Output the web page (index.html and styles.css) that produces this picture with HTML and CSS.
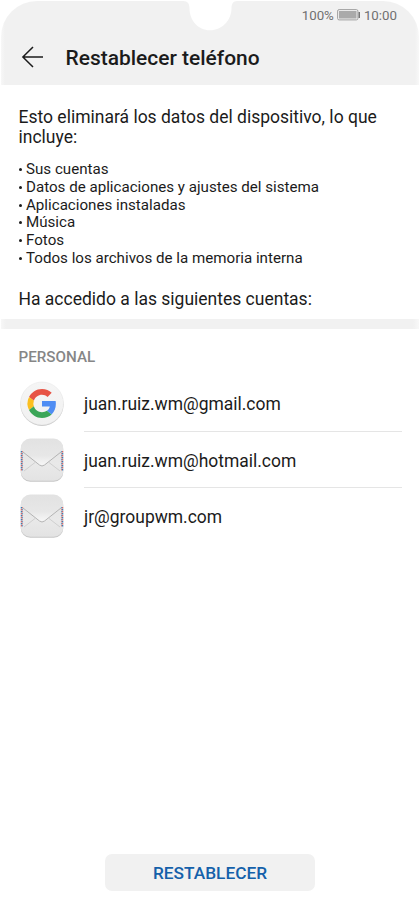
FILE: index.html
```html
<!DOCTYPE html>
<html lang="es">
<head>
<meta charset="utf-8">
<title>Restablecer teléfono</title>
<link rel="stylesheet" href="styles.css">
</head>
<body>
<div class="screen">
  <header class="header">
    <svg class="notch" width="54" height="31" viewBox="0 0 54 31"><path d="M0 0V1C5 1 6.500 4 6.500 8.500C6.500 20 15 30.300 27 30.300S48.500 20 48.500 8.500C48.500 4 50 1 54 1V0Z" fill="#fff"/></svg>
    <div class="status">
      <span>100%</span>
      <svg class="battery" width="24" height="12" viewBox="0 0 24 12"><rect x=".6" y=".6" width="20.300" height="10.300" rx="1.500" fill="#f1f1f1" stroke="#a0a0a0"/><rect x="2" y="2" width="17.500" height="7.500" fill="#aaa"/><path d="M21.500 3H23V9H21.500Z" fill="#777"/></svg>
      <span>10:00</span>
    </div>
    <div class="bar">
      <svg class="back" width="22" height="22" viewBox="0 0 22 22"><path d="M12 1 1.900 11 12 21M2 11H22" fill="none" stroke="#1b1b1b" stroke-width="1.500"/></svg>
      <h1 class="title">Restablecer teléfono</h1>
    </div>
  </header>
  <main class="content">
    <section class="info">
      <p class="lead">Esto eliminará los datos del dispositivo, lo que<br>incluye:</p>
      <ul class="items">
        <li>Sus cuentas</li>
        <li>Datos de aplicaciones y ajustes del sistema</li>
        <li>Aplicaciones instaladas</li>
        <li>Música</li>
        <li>Fotos</li>
        <li>Todos los archivos de la memoria interna</li>
      </ul>
      <p class="signed">Ha accedido a las siguientes cuentas:</p>
    </section>
    <div class="divider"></div>
    <h2 class="section">PERSONAL</h2>
    <div class="account">
      <svg class="icon" width="46" height="46" viewBox="0 0 46 46">
        <defs><linearGradient id="disc" x2="0" y2="1"><stop stop-color="#f5f5f5"/><stop offset="1" stop-color="#f1f1f1"/></linearGradient></defs>
        <circle cx="23" cy="23.400" r="21.500" fill="#c4c4c4"/><circle cx="23" cy="22.500" r="21.500" fill="url(#disc)" stroke="#e4e4e4" stroke-width=".5"/>
        <g transform="translate(8.500 8) scale(.604)">
          <path fill="#e75345" d="M24 9.500c3.540 0 6.710 1.220 9.210 3.600l6.850-6.850C35.900 2.380 30.470 0 24 0 14.620 0 6.510 5.380 2.560 13.220l7.980 6.190C12.430 13.720 17.740 9.500 24 9.500z"/>
          <path fill="#4f8df3" d="M46.980 24.550c0-1.570-.15-3.090-.38-4.550H24v9.020h12.940c-.58 2.960-2.260 5.480-4.780 7.180l7.730 6c4.510-4.180 7.090-10.360 7.090-17.650z"/>
          <path fill="#fbbf20" d="M10.530 28.590a14.500 14.500 0 0 1 0-9.180l-7.980-6.190a24 24 0 0 0 0 21.560z"/>
          <path fill="#3ba658" d="M24 48c6.480 0 11.930-2.130 15.890-5.810l-7.730-6c-2.150 1.450-4.920 2.300-8.160 2.300-6.260 0-11.570-4.220-13.470-9.910l-7.980 6.190C6.510 42.620 14.620 48 24 48z"/>
        </g>
      </svg>
      <div class="name">juan.ruiz.wm@gmail.com</div>
    </div>
    <div class="account">
      <svg class="icon" width="46" height="46" viewBox="0 0 46 46">
        <defs>
          <linearGradient id="paper" x2="0" y2="1"><stop stop-color="#e2e2e2"/><stop offset=".6" stop-color="#e9e9e9"/><stop offset="1" stop-color="#e3e3e3"/></linearGradient>
          <linearGradient id="flap" x2="0" y2="1"><stop stop-color="#e2e2e2"/><stop offset=".6" stop-color="#e7e7e7"/><stop offset="1" stop-color="#f8f8f8"/></linearGradient>
          <g id="mail">
            <rect x="1.800" y="2.500" width="42.400" height="42.200" rx="9.500" fill="#c6c6c6"/>
            <rect x="1.800" y="1.600" width="42.400" height="42.200" rx="9.500" fill="url(#paper)"/>
            <path d="M5 34 16 25.500M41 34 30 25.500" stroke="#d0d0d0" fill="none"/>
            <path d="M4 15 20.500 28Q23 30 25.500 28L42 15V10Q42 2.500 34 2.500H12Q4 2.500 4 10Z" fill="url(#flap)"/>
            <path d="M4 15 20.500 28Q23 30 25.500 28L42 15" stroke="#b4b4b4" fill="none"/>
            <path d="M1.800 14H4V34H1.800ZM42 14H44.200V34H42Z" fill="#f1f1f1"/>
            <path d="M2.400 16V34M43.600 14V34" stroke="#d9655f" stroke-width="1.200" stroke-dasharray="1.500 2.500"/>
            <path d="M3.500 14V34M42.500 16V34" stroke="#d9857f" stroke-width="1.100" stroke-dasharray="1.500 2.500"/>
            <path d="M2.400 14V34M43.600 16V34" stroke="#397fb9" stroke-width="1.200" stroke-dasharray="1.500 2.500"/>
            <path d="M3.500 16V34M42.500 14V34" stroke="#699dca" stroke-width="1.100" stroke-dasharray="1.500 2.500"/>
          </g>
        </defs>
        <use href="#mail"/>
      </svg>
      <div class="name">juan.ruiz.wm@hotmail.com</div>
    </div>
    <div class="account">
      <svg class="icon" width="46" height="46" viewBox="0 0 46 46"><use href="#mail"/></svg>
      <div class="name">jr@groupwm.com</div>
    </div>
  </main>
  <footer class="footer"><button class="reset">RESTABLECER</button></footer>
</div>
</body>
</html>
```
FILE: styles.css
```css
* { box-sizing: border-box; }
body { margin: 0; background: #fff; font-family: Roboto, sans-serif; color: #1b1b1b; }
h1, h2, p, ul { margin: 0; padding: 0; }
.screen { width: 420px; height: 910px; padding: 1px 1px 0; display: flex; flex-direction: column; }
.header { position: relative; height: 84px; background: linear-gradient(90deg, #f7f7f7, #f1f1f1 4px, #f1f1f1 414px, #f8f8f8); border-radius: 36px 36px 0 0; }
.notch { position: absolute; left: 182px; top: -1px; }
.status { display: flex; justify-content: flex-end; align-items: center; height: 28px; padding-right: 22px; font-size: 13.300px; color: #707070; }
.battery { margin: 0 3px 0 3px; }
.bar { display: flex; align-items: center; height: 56px; padding-left: 20px; }
.back { display: block; }
.title { margin: 2px 0 0 22.500px; font-size: 20.950px; font-weight: 500; line-height: 28px; }
.content { flex: 1; }
.info { height: 234px; padding: 22px 17.500px 0; }
.lead, .signed { font-size: 17.500px; line-height: 20px; white-space: nowrap; }
.items { list-style: none; margin: 14px 0 21.500px; font-size: 15.130px; line-height: 17.820px; }
.items li { display: flex; align-items: center; white-space: nowrap; }
.items li::before { content: ""; width: 3px; height: 3px; margin: 0 4.500px 1px 0; border-radius: 50%; background: #1b1b1b; }
.divider { height: 10px; background: linear-gradient(90deg, #f7f7f7, #f1f1f1 5px, #f1f1f1 412px, #f8f8f8); }
.section { padding: 18px 17.500px 0; height: 46.600px; font-size: 15.200px; line-height: 20px; font-weight: 500; color: #868686; }
.account { display: flex; height: 56.300px; padding: 0 17px 0 18px; }
.icon { flex: none; margin-top: 5px; }
.name { flex: 1; margin-left: 19px; border-bottom: 1px solid #e5e5e5; font-size: 17.470px; line-height: 57px; }
.account + .account .name { line-height: 58px; }
.account:last-child .name { border-bottom: 0; }
.footer { height: 56px; display: flex; justify-content: center; align-items: flex-start; }
.reset { width: 210px; height: 37px; padding: 1px 0 0; border: 0; border-radius: 7px; background: #f1f1f1; color: #1460aa; font: 500 17.250px Roboto, sans-serif; }
```
